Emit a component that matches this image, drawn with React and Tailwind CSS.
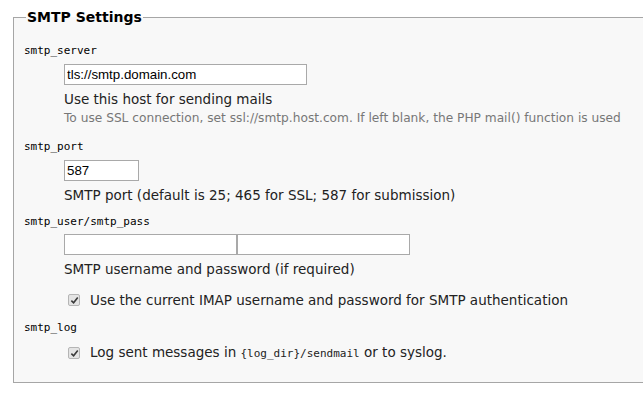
import React from "react";

const sans = { fontFamily: '"DejaVu Sans", Verdana, sans-serif' };
const mono = { fontFamily: '"DejaVu Sans Mono", monospace' };
const arial = { fontFamily: '"Liberation Sans", Arial, sans-serif' };

function Check() {
  return (
    <span className="inline-flex h-[12px] w-[12px] shrink-0 items-center justify-center rounded-[2px] border border-[#b5b5b5] bg-[#e4e4e4]">
      <svg viewBox="0 0 10 10" className="h-[9px] w-[9px]">
        <path d="M1.5 5.2 L4 7.6 L8.6 1.8" fill="none" stroke="#3a3a3a" strokeWidth="1.8" />
      </svg>
    </span>
  );
}

function Label({ children }) {
  return (
    <div className="text-[11px] leading-[14px] text-black" style={mono}>
      {children}
    </div>
  );
}

export default function App() {
  return (
    <div className="h-[405px] w-[643px] overflow-hidden bg-white">
      <fieldset className="ml-[13px] mt-[7px] w-[660px] border border-[#a6a6a6] bg-[#f8f8f8] px-[10px] pb-[20px]">
        <legend className="ml-[2px] px-[1px] text-[14px] font-bold leading-[20px] text-black" style={sans}>
          SMTP Settings
        </legend>

        {/* smtp_server */}
        <div className="mt-[17px]">
          <Label>smtp_server</Label>
          <div className="ml-[40px] mt-[6px]">
            <input
              defaultValue="tls://smtp.domain.com"
              className="block h-[21px] w-[243px] border border-[#a9a9a9] bg-white px-[2px] text-[13.3px] text-black outline-none"
              style={arial}
            />
            <div className="mt-[6px] text-[13.5px] leading-[16px] text-[#222]" style={sans}>
              Use this host for sending mails
            </div>
            <div className="mt-[4px] text-[12.2px] leading-[14px] text-[#777]" style={sans}>
              To use SSL connection, set ssl://smtp.host.com. If left blank, the PHP mail() function is used
            </div>
          </div>
        </div>

        {/* smtp_port */}
        <div className="mt-[15px]">
          <Label>smtp_port</Label>
          <div className="ml-[40px] mt-[6px]">
            <input
              defaultValue="587"
              className="block h-[21px] w-[75px] border border-[#a9a9a9] bg-white px-[2px] text-[13.3px] text-black outline-none"
              style={arial}
            />
            <div className="mt-[6px] text-[13.5px] leading-[16px] text-[#222]" style={sans}>
              SMTP port (default is 25; 465 for SSL; 587 for submission)
            </div>
          </div>
        </div>

        {/* smtp_user/smtp_pass */}
        <div className="mt-[12px]">
          <Label>smtp_user/smtp_pass</Label>
          <div className="ml-[40px] mt-[5px]">
            <div className="flex">
              <input className="block h-[21px] w-[173px] border border-[#a9a9a9] bg-white outline-none" />
              <input
                type="password"
                className="block h-[21px] w-[173px] border border-[#a9a9a9] bg-white outline-none"
              />
            </div>
            <div className="mt-[6px] text-[13.5px] leading-[16px] text-[#222]" style={sans}>
              SMTP username and password (if required)
            </div>
            <div className="mt-[15px] flex items-center gap-[10px] pl-[4px] text-[13.5px] leading-[16px] text-[#222]" style={sans}>
              <Check />
              <span>Use the current IMAP username and password for SMTP authentication</span>
            </div>
          </div>
        </div>

        {/* smtp_log */}
        <div className="mt-[13px]">
          <Label>smtp_log</Label>
          <div className="ml-[40px] mt-[9px]">
            <div className="flex items-center gap-[10px] pl-[4px] text-[13.5px] leading-[16px] text-[#222]" style={sans}>
              <Check />
              <span>
                Log sent messages in{" "}
                <span className="text-[11px]" style={mono}>
                  {"{log_dir}"}/sendmail
                </span>{" "}
                or to syslog.
              </span>
            </div>
          </div>
        </div>
      </fieldset>
    </div>
  );
}
